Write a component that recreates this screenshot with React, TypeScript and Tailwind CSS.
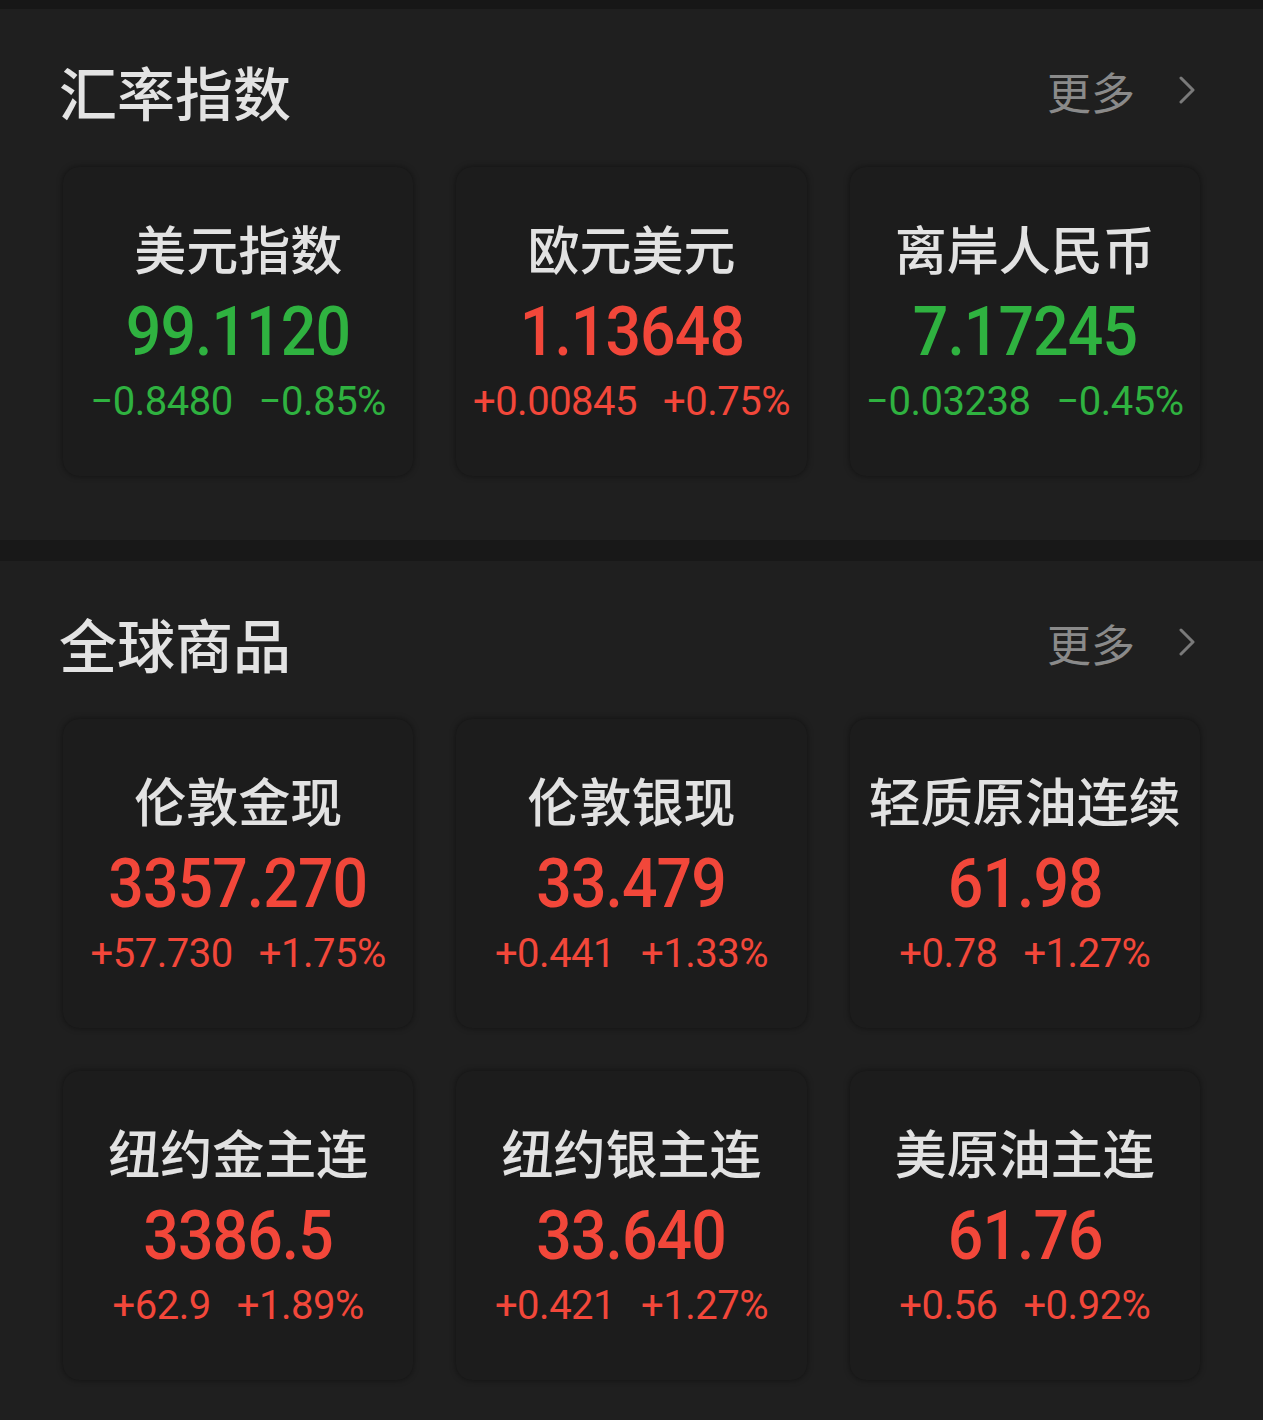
import React from "react";

type Quote = {
  name: string;
  value: string;
  change: string;
  percent: string;
  up: boolean;
};

const fxQuotes: Quote[] = [
  { name: "美元指数", value: "99.1120", change: "−0.8480", percent: "−0.85%", up: false },
  { name: "欧元美元", value: "1.13648", change: "+0.00845", percent: "+0.75%", up: true },
  { name: "离岸人民币", value: "7.17245", change: "−0.03238", percent: "−0.45%", up: false },
];

const commodityQuotes: Quote[] = [
  { name: "伦敦金现", value: "3357.270", change: "+57.730", percent: "+1.75%", up: true },
  { name: "伦敦银现", value: "33.479", change: "+0.441", percent: "+1.33%", up: true },
  { name: "轻质原油连续", value: "61.98", change: "+0.78", percent: "+1.27%", up: true },
  { name: "纽约金主连", value: "3386.5", change: "+62.9", percent: "+1.89%", up: true },
  { name: "纽约银主连", value: "33.640", change: "+0.421", percent: "+1.27%", up: true },
  { name: "美原油主连", value: "61.76", change: "+0.56", percent: "+0.92%", up: true },
];

const cjk = { fontFamily: '"Noto Sans CJK SC", "Noto Sans", sans-serif' };
const num = { fontFamily: 'Roboto, "Noto Sans", sans-serif' };

const QuoteCard = ({ q }: { q: Quote }) => {
  const color = q.up ? "text-[#f2473a]" : "text-[#2fb240]";
  return (
    <div className="h-[309px] rounded-[16px] bg-[#1c1c1c] shadow-[0_0_6px_rgba(0,0,0,0.45)] flex flex-col items-center pt-[51px]">
      <div className="h-[60px] leading-[60px] text-[52px] font-medium text-[#e2e2e2]" style={cjk}>
        {q.name}
      </div>
      <div
        className={`mt-[19px] h-[70px] leading-[70px] text-[68px] font-medium tracking-[-1px] scale-x-[0.92] ${color}`}
        style={num}
      >
        {q.value}
      </div>
      <div
        className={`mt-[15px] h-[40px] leading-[40px] text-[40px] flex gap-[26px] tracking-[-0.5px] ${color}`}
        style={num}
      >
        <span>{q.change}</span>
        <span>{q.percent}</span>
      </div>
    </div>
  );
};

const Section = ({ title, quotes, bottom }: { title: string; quotes: Quote[]; bottom: string }) => (
  <div className={`bg-[#1f1f1f] px-[63px] pt-[52px] ${bottom}`}>
    <div className="h-[60px] flex items-center justify-between">
      <div className="ml-[-4px] text-[58px] leading-[60px] font-medium text-[#e3e3e3]" style={cjk}>
        {title}
      </div>
      <div className="flex items-center mr-[4px]">
        <span className="text-[44px] leading-[60px] text-[#8a8a8a]" style={cjk}>
          更多
        </span>
        <svg width="18" height="28" viewBox="0 0 18 28" className="ml-[43px] mt-[-2px]" fill="none">
          <path d="M3 2 L15 14 L3 26" stroke="#7a7a7a" strokeWidth="3" strokeLinecap="round" strokeLinejoin="round" />
        </svg>
      </div>
    </div>
    <div className="mt-[46px] grid grid-cols-3 gap-x-[43px] gap-y-[43px]">
      {quotes.map((q) => (
        <QuoteCard key={q.name} q={q} />
      ))}
    </div>
  </div>
);

export default function App() {
  return (
    <div className="w-[1263px] min-h-[1420px] bg-[#1f1f1f]">
      <div className="h-[9px] bg-[#171717]" />
      <Section title="汇率指数" quotes={fxQuotes} bottom="pb-[64px]" />
      <div className="h-[21px] bg-[#181818]" />
      <Section title="全球商品" quotes={commodityQuotes} bottom="pb-[40px]" />
    </div>
  );
}
